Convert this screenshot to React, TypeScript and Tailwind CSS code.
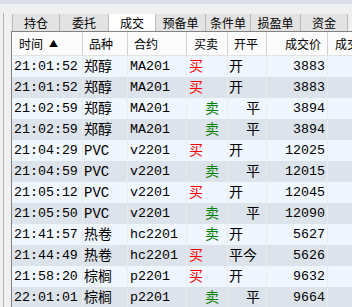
import React from 'react';

type Trade = { time: string; name: string; code: string; side: '买' | '卖'; oc: string; price: string };

const trades: Trade[] = [
  { time: '21:01:52', name: '郑醇', code: 'MA201', side: '买', oc: '开', price: '3883' },
  { time: '21:01:52', name: '郑醇', code: 'MA201', side: '买', oc: '开', price: '3883' },
  { time: '21:02:59', name: '郑醇', code: 'MA201', side: '卖', oc: '平', price: '3894' },
  { time: '21:02:59', name: '郑醇', code: 'MA201', side: '卖', oc: '平', price: '3894' },
  { time: '21:04:29', name: 'PVC', code: 'v2201', side: '买', oc: '开', price: '12025' },
  { time: '21:04:59', name: 'PVC', code: 'v2201', side: '卖', oc: '平', price: '12015' },
  { time: '21:05:12', name: 'PVC', code: 'v2201', side: '买', oc: '开', price: '12045' },
  { time: '21:05:50', name: 'PVC', code: 'v2201', side: '卖', oc: '平', price: '12090' },
  { time: '21:41:57', name: '热卷', code: 'hc2201', side: '卖', oc: '开', price: '5627' },
  { time: '21:44:49', name: '热卷', code: 'hc2201', side: '买', oc: '平今', price: '5626' },
  { time: '21:58:20', name: '棕榈', code: 'p2201', side: '买', oc: '开', price: '9632' },
  { time: '22:01:01', name: '棕榈', code: 'p2201', side: '卖', oc: '平', price: '9664' },
];

const tabs = [
  { label: '持仓', w: 'w-[48px]' },
  { label: '委托', w: 'w-[49px]' },
  { label: '成交', w: 'w-[47px]', active: true },
  { label: '预备单', w: 'w-[50px]' },
  { label: '条件单', w: 'w-[45px]' },
  { label: '损盈单', w: 'w-[50px]' },
  { label: '资金', w: 'w-[47px]' },
];

const cols = 'grid grid-cols-[71px_45px_59px_41px_39px_61px_60px]';

export default function App() {
  return (
    <div className="w-[352px] h-[307px] bg-[#f0f0f0] overflow-hidden flex flex-col font-['Noto_Sans_CJK_SC',sans-serif] text-black">
      <div className="h-[4px] bg-[#dcdeeb] shrink-0" />
      <div className="flex flex-1 min-h-0">
        {/* left frame */}
        <div className="w-[11px] shrink-0 flex pt-[9px]">
          <div className="w-[3px]" />
          <div className="w-[1px] bg-[#b4b4b4]" />
        </div>

        <div className="flex-1 min-w-0 flex flex-col pt-[10px]">
          {/* tabs */}
          <div className="flex h-[17px] shrink-0 pl-[1px]">
            {tabs.map((t) => (
              <div
                key={t.label}
                className={`${t.w} shrink-0 flex items-center justify-center text-[12px] leading-none border-r border-[#b8b8b8] ${
                  t.active ? 'bg-white' : 'bg-[#e3e3e3]'
                } ${t.label === '持仓' ? 'border-l' : ''}`}
              >
                {t.label}
              </div>
            ))}
          </div>

          {/* table */}
          <div className="flex-1 min-h-0 overflow-hidden border-l border-t border-[#828282]">
            <div className={`${cols} h-[24px] bg-[#fbfbfb] border-b border-[#e2e2e2] text-[12px] leading-none`}>
              <div className="flex items-center pl-[7px] gap-[6px] border-r border-[#d2d2d2]">
                <span>时间</span>
                <span className="text-[9px]">▲</span>
              </div>
              <div className="flex items-center pl-[6px] border-r border-[#d2d2d2]">品种</div>
              <div className="flex items-center pl-[6px] border-r border-[#d2d2d2]">合约</div>
              <div className="flex items-center pl-[7px] border-r border-[#d2d2d2]">买卖</div>
              <div className="flex items-center pl-[6px] border-r border-[#d2d2d2]">开平</div>
              <div className="flex items-center justify-end pr-[6px] border-r border-[#d2d2d2]">成交价</div>
              <div className="flex items-center pl-[7px] whitespace-nowrap">成交量</div>
            </div>

            {trades.map((r, i) => (
              <div
                key={i}
                className={`${cols} h-[21px] text-[13.3px] leading-none font-['Liberation_Mono','Noto_Sans_CJK_SC',monospace] ${
                  i % 2 === 0 ? 'bg-[#f0f6fe]' : 'bg-[#dde3ea]'
                }`}
              >
                <div className="flex items-center pl-[2px] border-r border-[#e8ecf1]">{r.time}</div>
                <div className="flex items-center pl-[1px] text-[14px] border-r border-[#e8ecf1]">{r.name}</div>
                <div className="flex items-center pl-[2px] border-r border-[#e8ecf1]">{r.code}</div>
                <div
                  className={`flex items-center text-[14px] border-r border-[#e8ecf1] ${
                    r.side === '买' ? 'pl-[2px] text-[#ff0000]' : 'pl-[18px] text-[#008000]'
                  }`}
                >
                  {r.side}
                </div>
                <div
                  className={`flex items-center text-[14px] border-r border-[#e8ecf1] ${
                    r.oc === '平' ? 'pl-[18px]' : 'pl-[1px]'
                  }`}
                >
                  {r.oc}
                </div>
                <div className="flex items-center justify-end pr-[2px] border-r border-[#e8ecf1]">{r.price}</div>
                <div />
              </div>
            ))}
          </div>
        </div>
      </div>
    </div>
  );
}
